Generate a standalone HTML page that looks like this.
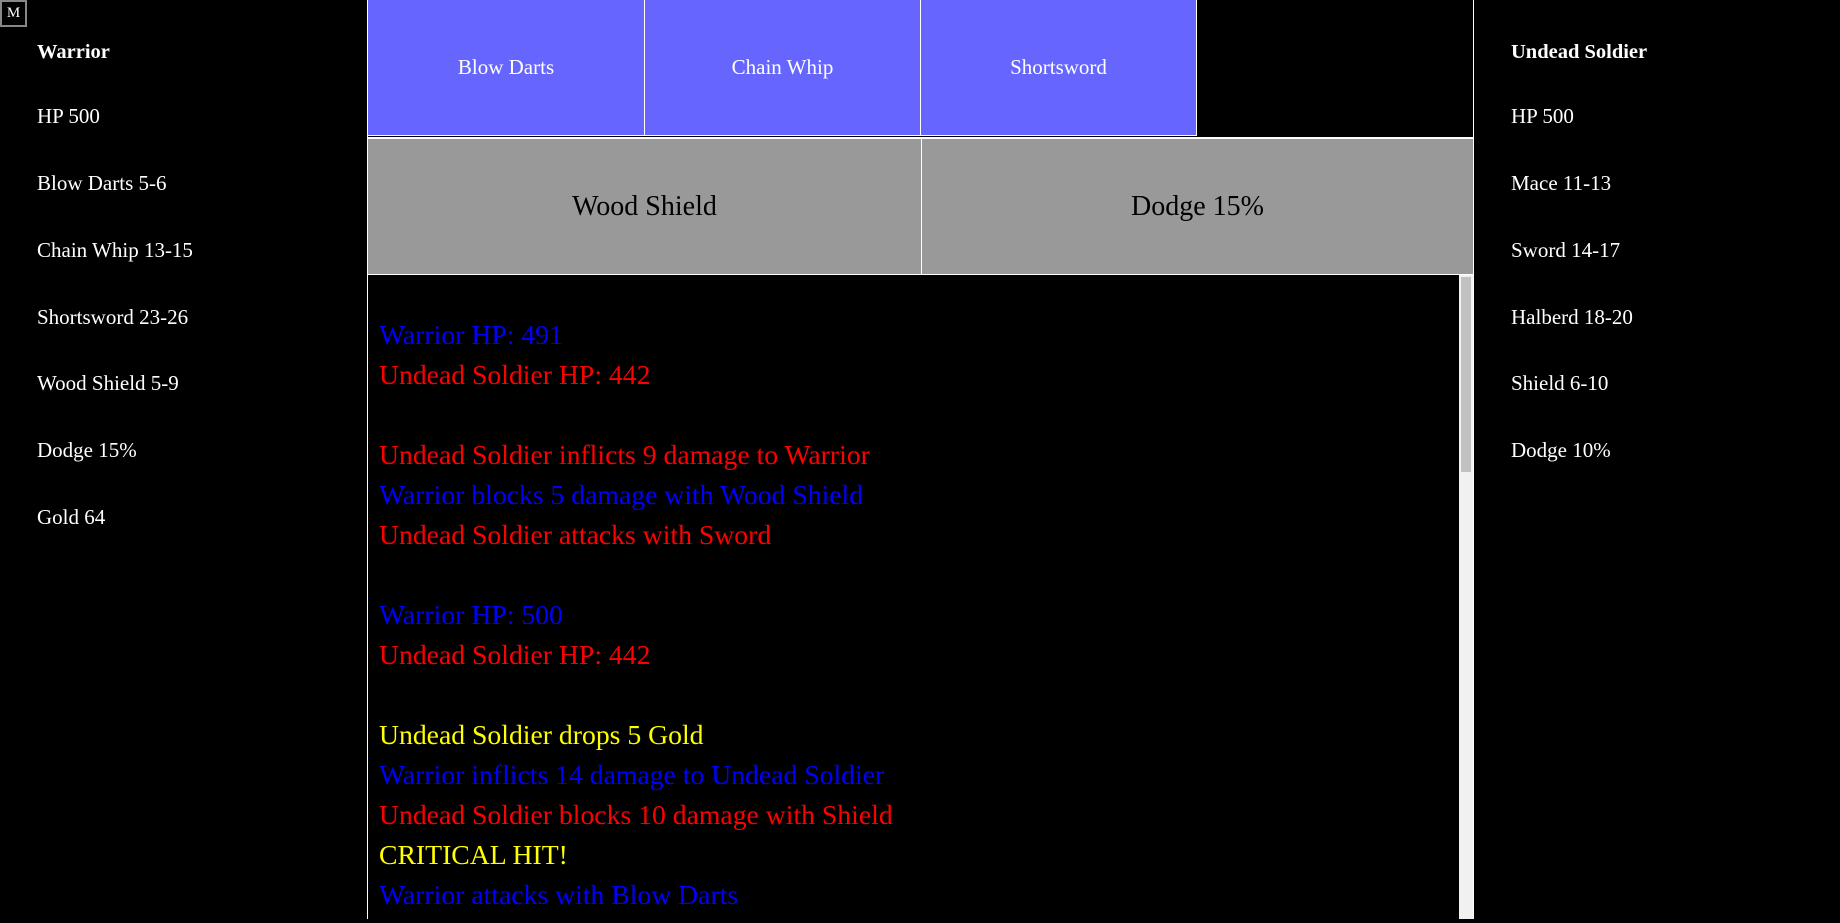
<!DOCTYPE html>
<html><head><meta charset="utf-8"><style>
html,body{margin:0;padding:0;background:#000;width:1840px;height:923px;overflow:hidden;font-family:"Liberation Serif",serif;color:#fff}
.abs{position:absolute}
#m{left:0;top:0;width:23px;height:23px;border:2px solid #888;color:#fff;font-size:15px;text-align:center;line-height:23px;background:#000}
.side{position:absolute;top:1px;font-size:21px}
.side div{position:absolute;left:0;white-space:nowrap;line-height:24px}
.side div.h{font-weight:bold;font-size:20.5px}
.btn{position:absolute;top:0;height:136px;background:#6666ff;border-right:1px solid #fff;border-bottom:1px solid #fff;color:#fff;font-size:21px;display:flex;align-items:center;justify-content:center;box-sizing:border-box;padding-top:0}
.gray{position:absolute;top:137px;height:138px;background:#999;border:1px solid #fff;border-top:2px solid #fff;box-sizing:border-box;color:#000;font-size:28px;display:flex;align-items:center;justify-content:center}
#log{position:absolute;left:367px;top:275px;width:1092px;height:644px;border-left:1px solid #fff;box-sizing:border-box;overflow:hidden}
#log div{position:absolute;left:11px;font-size:27.7px;line-height:40px;white-space:nowrap;margin-top:1px}
.b{color:#0000ff}.r{color:#ff0000}.y{color:#ffff00}
</style></head><body>
<div id="m" class="abs">M</div>
<div class="side" style="left:37px">
<div class="h" style="top:39px">Warrior</div>
<div style="top:103px">HP 500</div>
<div style="top:170px">Blow Darts 5-6</div>
<div style="top:237px">Chain Whip 13-15</div>
<div style="top:304px">Shortsword 23-26</div>
<div style="top:370px">Wood Shield 5-9</div>
<div style="top:437px">Dodge 15%</div>
<div style="top:504px">Gold 64</div>
</div>
<div class="side" style="left:1511px">
<div class="h" style="top:39px">Undead Soldier</div>
<div style="top:103px">HP 500</div>
<div style="top:170px">Mace 11-13</div>
<div style="top:237px">Sword 14-17</div>
<div style="top:304px">Halberd 18-20</div>
<div style="top:370px">Shield 6-10</div>
<div style="top:437px">Dodge 10%</div>
</div>
<div class="abs" style="left:367px;top:0;width:1px;height:919px;background:#fff"></div>
<div class="abs" style="left:1473px;top:0;width:1px;height:919px;background:#fff"></div>
<div class="btn" style="left:368px;width:277px">Blow Darts</div>
<div class="btn" style="left:645px;width:276px">Chain Whip</div>
<div class="btn" style="left:921px;width:276px">Shortsword</div>
<div class="gray" style="left:367px;width:555px">Wood Shield</div>
<div class="gray" style="left:921px;width:553px">Dodge 15%</div>
<div id="log">
<div class="b" style="top:39px">Warrior HP: 491</div>
<div class="r" style="top:79px">Undead Soldier HP: 442</div>
<div class="r" style="top:159px">Undead Soldier inflicts 9 damage to Warrior</div>
<div class="b" style="top:199px">Warrior blocks 5 damage with Wood Shield</div>
<div class="r" style="top:239px">Undead Soldier attacks with Sword</div>
<div class="b" style="top:319px">Warrior HP: 500</div>
<div class="r" style="top:359px">Undead Soldier HP: 442</div>
<div class="y" style="top:439px">Undead Soldier drops 5 Gold</div>
<div class="b" style="top:479px">Warrior inflicts 14 damage to Undead Soldier</div>
<div class="r" style="top:519px">Undead Soldier blocks 10 damage with Shield</div>
<div class="y" style="top:559px">CRITICAL HIT!</div>
<div class="b" style="top:599px">Warrior attacks with Blow Darts</div>
</div>
<div class="abs" style="left:1459px;top:275px;width:14px;height:644px;background:#f1f1f1"></div>
<div class="abs" style="left:1461px;top:277px;width:10px;height:195px;background:#c1c1c1"></div>
</body></html>
